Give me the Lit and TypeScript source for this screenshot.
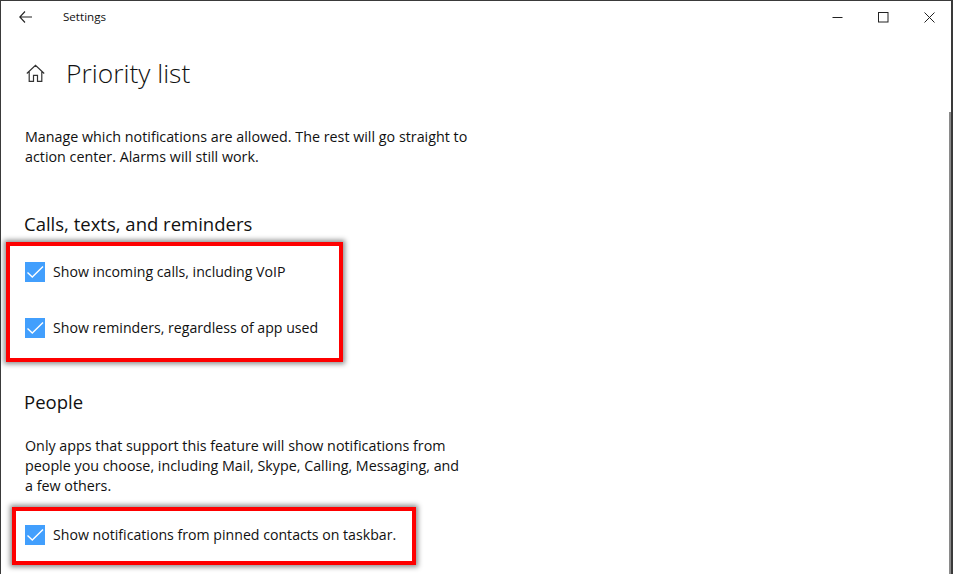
import { LitElement, html, css } from 'lit';
import { customElement } from 'lit/decorators.js';

@customElement('app-root')
export class AppRoot extends LitElement {
  static styles = css`
    :host {
      display: block;
      width: 953px;
      height: 574px;
      box-sizing: border-box;
      overflow: hidden;
      position: relative;
      background: #fff;
      color: #111;
      font-family: "Open Sans", "Noto Sans", sans-serif;
      font-size: 14.3px;
      border: solid #3a3a3a;
      border-width: 1px 2px 0 1px;
    }

    .titlebar {
      display: flex;
      align-items: center;
      height: 32px;
    }

    .back {
      display: block;
      margin-left: 18px;
    }

    .app-name {
      margin-left: 31px;
      font-size: 11.6px;
      line-height: 32px;
    }

    .controls {
      margin-left: auto;
      display: flex;
      align-items: center;
      gap: 35px;
      margin-right: 16px;
    }

    .controls svg {
      display: block;
    }

    .page-title {
      display: flex;
      align-items: center;
      margin: 16px 0 0 25px;
      height: 48px;
    }

    h1 {
      margin: 0 0 0 21px;
      font-size: 26.4px;
      font-weight: 300;
      line-height: 48px;
    }

    .content {
      padding-left: 24px;
    }

    p {
      margin: 0;
      width: 443px;
      line-height: 20px;
    }

    .intro {
      margin-top: 30px;
    }

    h2 {
      margin: 0 0 0 -1px;
      font-size: 18.5px;
      font-weight: 400;
      line-height: 26px;
    }

    .calls-heading {
      margin-top: 44px;
    }

    .people-heading {
      margin-top: 27px;
    }

    .people-note {
      margin-top: 21px;
    }

    .highlight {
      box-sizing: border-box;
      border: 4px solid #fe0000;
      box-shadow: 0 0 5px 2px rgba(0, 0, 0, 0.45);
    }

    .highlight.calls {
      margin: 5px 0 0 -19px;
      width: 337px;
      height: 120px;
      padding: 16px 0 0 15px;
    }

    .highlight.pinned {
      margin: 11px 0 0 -13px;
      width: 404px;
      height: 58px;
      padding: 14px 0 0 9px;
    }

    .option {
      display: flex;
      align-items: center;
      height: 20px;
      white-space: nowrap;
      font-size: 14.15px;
    }

    .option span {
      padding-bottom: 2px;
    }

    .option + .option {
      margin-top: 36px;
    }

    .check {
      display: block;
      flex: none;
      margin-right: 8px;
    }

    .scrollbar {
      position: absolute;
      top: 111px;
      right: 0;
      bottom: 0;
      width: 2px;
      background: #8a8a8a;
    }
  `;

  private checkbox() {
    return html`<svg class="check" width="20" height="20" viewBox="0 0 20 20">
      <rect width="20" height="20" fill="#429ffd"></rect>
      <path d="M2.500 10.500 7.300 15 18 4.500" fill="none" stroke="#fff" stroke-width="1.400"></path>
    </svg>`;
  }

  render() {
    return html`
      <div class="titlebar">
        <svg class="back" width="13" height="12" viewBox="0 0 13 12">
          <path d="M6 .5.800 6 6 11.500M.800 6H13" fill="none" stroke="#222" stroke-width="1.100"></path>
        </svg>
        <span class="app-name">Settings</span>
        <div class="controls">
          <svg width="11" height="11" viewBox="0 0 11 11"><path d="M.5 5.500h10" stroke="#222"></path></svg>
          <svg width="11" height="11" viewBox="0 0 11 11"><rect x=".5" y=".5" width="9.500" height="9.500" fill="none" stroke="#222"></rect></svg>
          <svg width="11" height="11" viewBox="0 0 11 11"><path d="M.5.5l10 10M10.500.5l-10 10" stroke="#222"></path></svg>
        </div>
      </div>

      <div class="page-title">
        <svg width="19" height="19" viewBox="0 0 19 19">
          <path d="M.8 9.500 9.500 1.300l8.700 8.200M3.200 7.500v9.800h4.300v-6h4v6h4.300V7.500" fill="none" stroke="#333" stroke-width="1.200"></path>
        </svg>
        <h1>Priority list</h1>
      </div>

      <div class="content">
        <p class="intro">Manage which notifications are allowed. The rest will go straight to action center. Alarms will still work.</p>

        <h2 class="calls-heading">Calls, texts, and reminders</h2>
        <div class="highlight calls">
          <div class="option">${this.checkbox()}<span>Show incoming calls, including VoIP</span></div>
          <div class="option">${this.checkbox()}<span>Show reminders, regardless of app used</span></div>
        </div>

        <h2 class="people-heading">People</h2>
        <p class="people-note">Only apps that support this feature will show notifications from people you choose, including Mail, Skype, Calling, Messaging, and a few others.</p>
        <div class="highlight pinned">
          <div class="option">${this.checkbox()}<span>Show notifications from pinned contacts on taskbar.</span></div>
        </div>
      </div>

      <div class="scrollbar"></div>
    `;
  }
}
